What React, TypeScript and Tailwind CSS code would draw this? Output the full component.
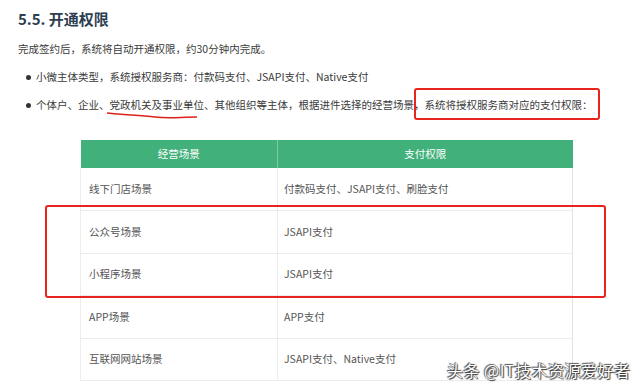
const rows = [
  { scene: "线下门店场景", pay: "付款码支付、JSAPI支付、刷脸支付" },
  { scene: "公众号场景", pay: "JSAPI支付" },
  { scene: "小程序场景", pay: "JSAPI支付" },
  { scene: "APP场景", pay: "APP支付" },
  { scene: "互联网网站场景", pay: "JSAPI支付、Native支付" },
]

export default function App() {
  return (
    <div
      className="relative w-[640px] h-[389px] overflow-hidden bg-white pl-[18px] pt-[9px] text-[#3a3a3a]"
      style={{ fontFamily: '"Noto Sans CJK SC", "Noto Sans", sans-serif' }}
    >
      <h2 className="text-[15px] leading-[20px] font-bold text-[#2c3e50]">5.5. 开通权限</h2>
      <p className="mt-[10px] text-[10.5px] leading-[20px]">完成签约后，系统将自动开通权限，约30分钟内完成。</p>

      <ul className="mt-[8px] space-y-[8px] text-[10.5px] leading-[20px]">
        <li className="flex items-center">
          <span className="ml-[8px] mr-[5px] w-[5px] h-[5px] rounded-full bg-[#333]" />
          小微主体类型，系统授权服务商：付款码支付、JSAPI支付、Native支付
        </li>
        <li className="flex items-center">
          <span className="ml-[8px] mr-[5px] w-[5px] h-[5px] rounded-full bg-[#333]" />
          个体户、企业、党政机关及事业单位、其他组织等主体，根据进件选择的经营场景，系统将授权服务商对应的支付权限：
        </li>
      </ul>

      <table className="mt-[25px] ml-[62px] w-[493px] border-collapse text-[10.5px] text-[#555]">
        <thead>
          <tr className="bg-[#41b07b] text-white h-[28px]">
            <th className="w-[197px] font-normal border-r border-[#7fcaa3]">经营场景</th>
            <th className="font-normal">支付权限</th>
          </tr>
        </thead>
        <tbody>
          {rows.map((r, i) => (
            <tr key={i} className="h-[42.5px] border-b border-[#ececec]">
              <td className="pl-[8px] border-l border-r border-[#ececec]">{r.scene}</td>
              <td className="pl-[6px] border-r border-[#e2e2e2]">{r.pay}</td>
            </tr>
          ))}
        </tbody>
      </table>

      {/* red hand annotations */}
      <svg className="absolute left-0 top-0" width="640" height="389">
        <path d="M107 113 C 125 115, 140 115, 155 117 S 180 117, 197 117" stroke="#e0201a" strokeWidth="1.5" fill="none" />
      </svg>
      <div className="absolute left-[414px] top-[88px] w-[186px] h-[32px] border-2 border-[#e8241c] rounded-[3px]" />
      <div className="absolute left-[45px] top-[205px] w-[561px] h-[93px] border-2 border-[#e8241c] rounded-[3px]" />

      <div
        className="absolute left-[447px] top-[360px] text-[16px] leading-[20px] text-white tracking-[0.5px]"
        style={{ textShadow: "0 0 1px #333, 1px 1px 1px #333, -1px -1px 1px #555" }}
      >
        头条 @IT技术资源爱好者
      </div>
    </div>
  )
}
